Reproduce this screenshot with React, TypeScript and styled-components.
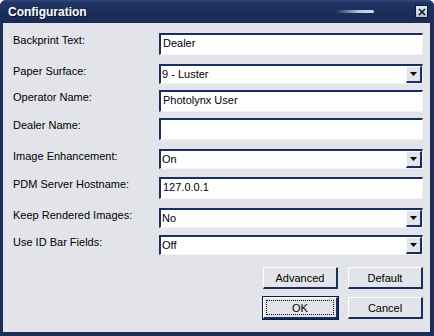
import React from "react";
import styled, { createGlobalStyle } from "styled-components";

const Global = createGlobalStyle`
  html, body { margin: 0; padding: 0; background: #ffffff; }
  #root { width: 434px; height: 336px; }
`;

const Window = styled.div`
  width: 434px;
  height: 336px;
  display: flex;
  flex-direction: column;
  box-sizing: border-box;
  background: #1c2e58;
  border-radius: 6px 6px 0 0;
  overflow: hidden;
  font-family: "Liberation Sans", Arial, sans-serif;
`;

const TitleBar = styled.div`
  height: 23px;
  flex: none;
  display: flex;
  align-items: center;
  padding: 0 6px 0 8px;
  background: linear-gradient(to bottom, #34497a 0%, #1f3366 12%, #1b2e5c 60%, #1a2c58 100%);
`;

const Title = styled.span`
  color: #ffffff;
  font-weight: bold;
  font-size: 12px;
  text-shadow: 1px 1px 0 #0a1430;
  flex: 1;
`;

const Glare = styled.span`
  width: 38px;
  height: 3px;
  border-radius: 2px;
  margin-right: 41px;
  background: linear-gradient(to right, rgba(180, 195, 220, 0), #b9c5dc 60%, #d5dcea);
`;

const CloseBtn = styled.div`
  width: 13px;
  height: 13px;
  box-sizing: border-box;
  border: 1px solid #0d1a38;
  background: linear-gradient(to bottom, #e8ebf1, #b9c0cf);
  display: flex;
  align-items: center;
  justify-content: center;
`;

const Body = styled.div`
  flex: 1;
  margin: 0 4px 4px 3px;
  background: #e3e4ea;
  display: flex;
  flex-direction: column;
  padding: 0 7px 0 10px;
`;

const Form = styled.div`
  display: flex;
  flex-direction: column;
`;

const Row = styled.div<{ $top: number }>`
  display: grid;
  grid-template-columns: 146px 264px;
  margin-top: ${(p) => p.$top}px;
  align-items: start;
`;

const Label = styled.label`
  font-size: 11px;
  line-height: 13px;
  color: #000;
  padding-top: 1px;
`;

const TextBox = styled.div`
  height: 22px;
  box-sizing: border-box;
  background: #ffffff;
  border-top: 2px solid #1b2f5e;
  border-left: 2px solid #1b2f5e;
  border-right: 1px solid #f2f3f6;
  border-bottom: 1px solid #f2f3f6;
  font-size: 11px;
  line-height: 16px;
  padding-left: 2px;
  color: #000;
  white-space: nowrap;
`;

const SelectBox = styled.div`
  height: 20px;
  box-sizing: border-box;
  background: #ffffff;
  border-top: 2px solid #1b2f5e;
  border-left: 2px solid #1b2f5e;
  border-right: 1px solid #f2f3f6;
  border-bottom: 1px solid #f2f3f6;
  display: flex;
  align-items: stretch;
  font-size: 11px;
  color: #000;
`;

const SelectText = styled.span`
  flex: 1;
  padding-left: 1px;
  line-height: 16px;
  white-space: nowrap;
`;

const DropBtn = styled.span`
  width: 16px;
  box-sizing: border-box;
  background: #e3e4ea;
  border-top: 1px solid #ffffff;
  border-left: 1px solid #ffffff;
  border-right: 2px solid #1b2f5e;
  border-bottom: 2px solid #1b2f5e;
  display: flex;
  align-items: center;
  justify-content: center;
`;

const Buttons = styled.div`
  display: grid;
  grid-template-columns: 75px 75px;
  column-gap: 10px;
  row-gap: 8px;
  justify-content: end;
  margin-top: 12px;
`;

const Button = styled.div<{ $default?: boolean }>`
  height: 22px;
  box-sizing: border-box;
  background: #e3e4ea;
  border-top: 1px solid #ffffff;
  border-left: 1px solid #ffffff;
  border-right: 2px solid #1b2f5e;
  border-bottom: 2px solid #1b2f5e;
  outline: ${(p) => (p.$default ? "1px solid #0d1a38" : "none")};
  display: flex;
  align-items: center;
  justify-content: center;
  font-size: 11px;
  color: #000;
  position: relative;
`;

const Focus = styled.span`
  position: absolute;
  inset: 2px;
  border: 1px dotted #000;
`;

const Arrow = () => (
  <svg width="7" height="4" viewBox="0 0 7 4">
    <path d="M0 0h7L3.5 4z" fill="#000" />
  </svg>
);

const X = () => (
  <svg width="8" height="8" viewBox="0 0 8 8">
    <path d="M1 1L7 7M7 1L1 7" stroke="#0d1a38" strokeWidth="1.6" />
  </svg>
);

type Field = { label: string; kind: "text" | "select"; value: string; top: number };

const fields: Field[] = [
  { label: "Backprint Text:", kind: "text", value: "Dealer", top: 10 },
  { label: "Paper Surface:", kind: "select", value: "9 - Luster", top: 9 },
  { label: "Operator Name:", kind: "text", value: "Photolynx User", top: 6 },
  { label: "Dealer Name:", kind: "text", value: "", top: 6 },
  { label: "Image Enhancement:", kind: "select", value: "On", top: 9 },
  { label: "PDM Server Hostname:", kind: "text", value: "127.0.0.1", top: 8 },
  { label: "Keep Rendered Images:", kind: "select", value: "No", top: 9 },
  { label: "Use ID Bar Fields:", kind: "select", value: "Off", top: 7 },
];

export default function App() {
  return (
    <>
      <Global />
      <Window>
        <TitleBar>
          <Title>Configuration</Title>
          <Glare />
          <CloseBtn>
            <X />
          </CloseBtn>
        </TitleBar>
        <Body>
          <Form>
            {fields.map((f) => (
              <Row key={f.label} $top={f.top}>
                <Label>{f.label}</Label>
                {f.kind === "text" ? (
                  <TextBox>{f.value}</TextBox>
                ) : (
                  <SelectBox>
                    <SelectText>{f.value}</SelectText>
                    <DropBtn>
                      <Arrow />
                    </DropBtn>
                  </SelectBox>
                )}
              </Row>
            ))}
          </Form>
          <Buttons>
            <Button>Advanced</Button>
            <Button>Default</Button>
            <Button $default>
              <Focus />
              OK
            </Button>
            <Button>Cancel</Button>
          </Buttons>
        </Body>
      </Window>
    </>
  );
}
